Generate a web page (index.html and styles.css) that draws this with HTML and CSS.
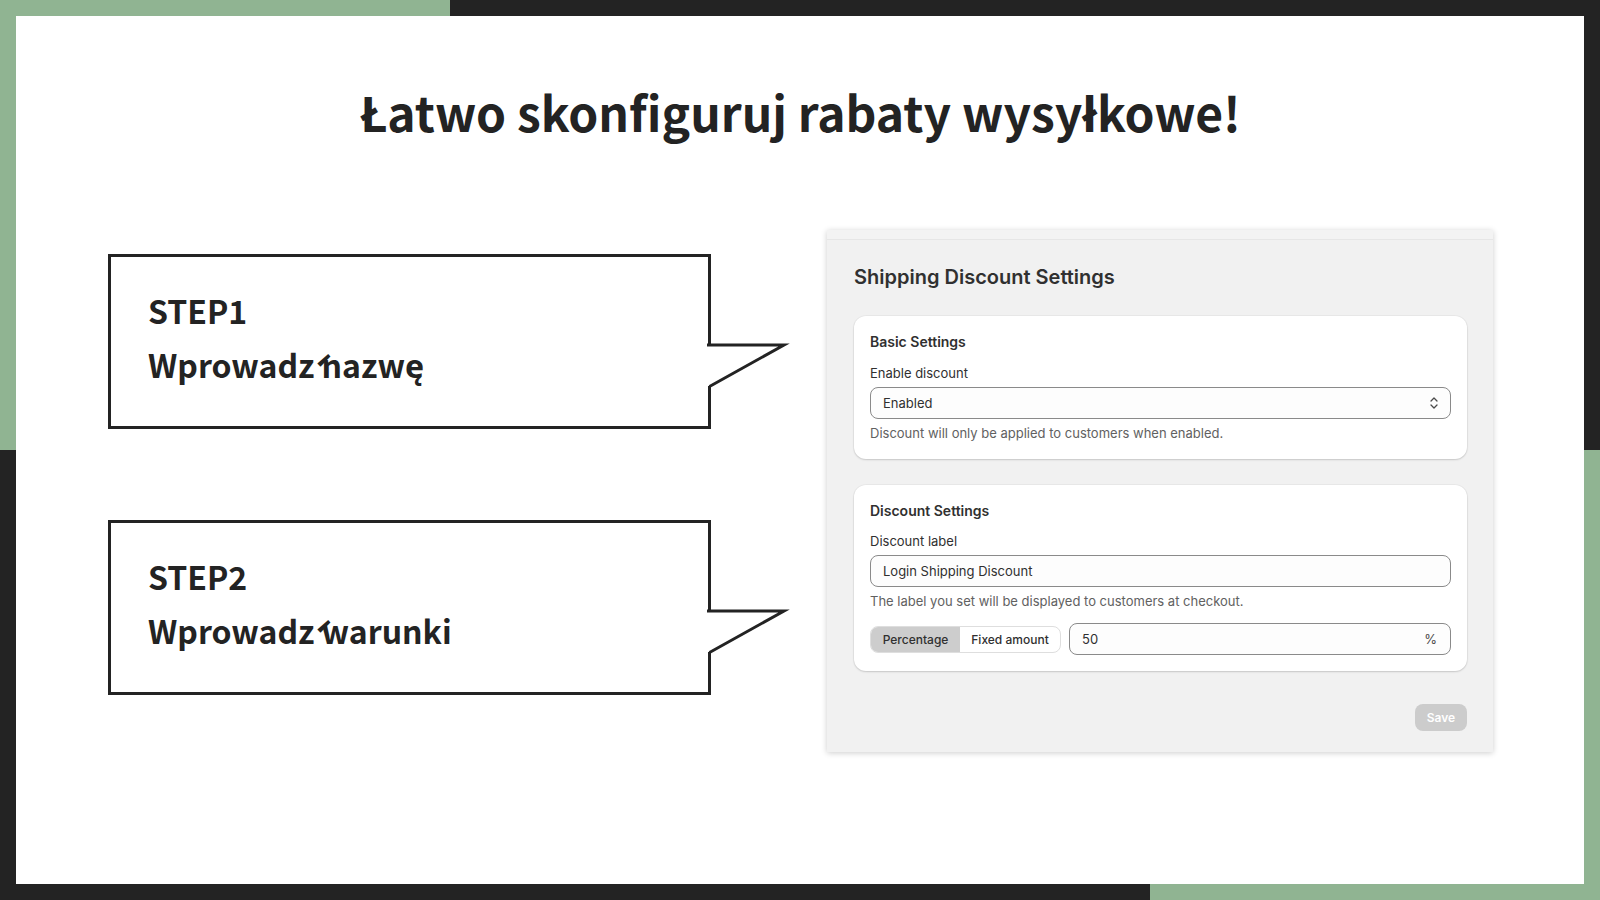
FILE: index.html
```html
<!DOCTYPE html>
<html lang="pl">
<head>
  <meta charset="UTF-8">
  <meta name="viewport" content="width=device-width, initial-scale=1.0">
  <title>Łatwo skonfiguruj rabaty wysyłkowe!</title>
  <link rel="stylesheet" href="styles.css">
</head>
<body>
  <div class="stage">
    <div class="slide">
      <h1 class="title">Łatwo skonfiguruj rabaty wysyłkowe!</h1>

      <div class="content">
        <div class="steps">
          <div class="bubble">
            <p class="step">STEP1</p>
            <p class="step">Wprowadź nazwę</p>
            <svg class="tail" width="80" height="48" viewBox="0 0 80 48">
              <polygon points="1,5 78,5 5,46 1,46" fill="#fff"/>
              <polyline points="1,5 78,5 3.5,46.5" fill="none" stroke="#232323" stroke-width="3" stroke-miterlimit="10"/>
            </svg>
          </div>
          <div class="bubble">
            <p class="step">STEP2</p>
            <p class="step">Wprowadź warunki</p>
            <svg class="tail" width="80" height="48" viewBox="0 0 80 48">
              <polygon points="1,5 78,5 5,46 1,46" fill="#fff"/>
              <polyline points="1,5 78,5 3.5,46.5" fill="none" stroke="#232323" stroke-width="3" stroke-miterlimit="10"/>
            </svg>
          </div>
        </div>

        <div class="panel">
          <div class="panel-band"></div>
          <div class="panel-body">
            <h2 class="panel-title">Shipping Discount Settings</h2>

            <div class="card">
              <h3 class="card-title">Basic Settings</h3>
              <div class="label">Enable discount</div>
              <div class="field select">
                <span>Enabled</span>
                <svg width="10" height="14" viewBox="0 0 10 14">
                  <path d="M2 5l3-3 3 3M2 9l3 3 3-3" fill="none" stroke="#4a4a4a" stroke-width="1.3" stroke-linecap="round" stroke-linejoin="round"/>
                </svg>
              </div>
              <div class="help">Discount will only be applied to customers when enabled.</div>
            </div>

            <div class="card card-second">
              <h3 class="card-title">Discount Settings</h3>
              <div class="label">Discount label</div>
              <div class="field">
                <span>Login Shipping Discount</span>
              </div>
              <div class="help">The label you set will be displayed to customers at checkout.</div>
              <div class="amount-row">
                <div class="segmented">
                  <span class="seg seg-active">Percentage</span>
                  <span class="seg">Fixed amount</span>
                </div>
                <div class="field value">
                  <span>50</span>
                  <span class="suffix">%</span>
                </div>
              </div>
            </div>

            <div class="actions">
              <button class="save" type="button">Save</button>
            </div>
          </div>
        </div>
      </div>
    </div>
  </div>
</body>
</html>
```

FILE: styles.css
```css
body {
  margin: 0;
  background: #232323;
}
.stage {
  width: 1600px;
  height: 900px;
  padding: 16px;
  box-sizing: border-box;
  background:
    linear-gradient(#90b492, #90b492) 0 0 / 450px 16px no-repeat,
    linear-gradient(#90b492, #90b492) 0 0 / 16px 450px no-repeat,
    linear-gradient(#90b492, #90b492) 100% 100% / 450px 16px no-repeat,
    linear-gradient(#90b492, #90b492) 100% 100% / 16px 450px no-repeat,
    #232323;
}
.slide {
  height: 100%;
  background: #fff;
  padding: 66px 91px 0 92px;
  box-sizing: border-box;
}
.title {
  margin: 0;
  font-family: "Noto Sans CJK JP", "Noto Sans", sans-serif;
  font-weight: 700;
  font-size: 48px;
  line-height: 58px;
  color: #232323;
  text-align: center;
}
.content {
  display: flex;
  justify-content: space-between;
  align-items: flex-start;
}
.steps {
  display: flex;
  flex-direction: column;
  gap: 91px;
  margin-top: 114px;
}
.bubble {
  position: relative;
  width: 603px;
  height: 175px;
  box-sizing: border-box;
  border: 3px solid #232323;
  background: #fff;
  padding: 26px 37px;
}
.step {
  margin: 0;
  font-family: "Noto Sans CJK JP", "Noto Sans", sans-serif;
  font-weight: 700;
  font-size: 32px;
  line-height: 54px;
  color: #232323;
}
.tail {
  position: absolute;
  left: 595px;
  top: 83px;
  overflow: visible;
}

/* settings panel */
.panel {
  margin-top: 90px;
  width: 666px;
  height: 522px;
  background: #f1f1f1;
  box-shadow: 0 1px 6px rgba(0, 0, 0, 0.2);
  font-family: Inter, "Liberation Sans", sans-serif;
  color: #303030;
}
.panel-band {
  height: 9px;
  background: #f3f3f3;
  border-bottom: 1px solid #e6e6e6;
}
.panel-body {
  padding: 0 26px 0 27px;
}
.panel-title {
  margin: 25px 0 27px;
  font-size: 20px;
  line-height: 24px;
  font-weight: 600;
}
.card {
  background: #fff;
  border-radius: 12px;
  padding: 16px;
  box-shadow: 0 1px 2px rgba(0, 0, 0, 0.15), 0 0 0 1px rgba(0, 0, 0, 0.03);
}
.card-title {
  margin: 0 0 11px;
  font-size: 14px;
  line-height: 20px;
  font-weight: 600;
}
.card-second {
  margin-top: 26px;
}
.card-second .card-title {
  margin-bottom: 10px;
}
.label {
  font-size: 13px;
  line-height: 20px;
  margin-bottom: 4px;
}
.field {
  height: 32px;
  box-sizing: border-box;
  border: 1px solid #8a8a8a;
  border-radius: 8px;
  background: #fdfdfd;
  padding: 0 12px;
  display: flex;
  align-items: center;
  justify-content: space-between;
  font-size: 13px;
}
.select svg {
  margin-right: -1px;
}
.help {
  margin-top: 4px;
  font-size: 13px;
  line-height: 20px;
  color: #616161;
}
.amount-row {
  margin-top: 12px;
  display: flex;
  align-items: center;
  gap: 8px;
}
.segmented {
  display: flex;
  height: 27px;
  border: 1px solid #dedede;
  border-radius: 8px;
  overflow: hidden;
  box-sizing: border-box;
  background: #fff;
}
.seg {
  display: flex;
  align-items: center;
  justify-content: center;
  width: 100px;
  font-size: 12px;
  font-weight: 500;
}
.seg-active {
  width: 89px;
  background: #cdcdcd;
}
.value {
  flex: 1;
}
.suffix {
  color: #4a4a4a;
  margin-right: 1px;
}
.actions {
  display: flex;
  justify-content: flex-end;
  margin-top: 33px;
}
.save {
  width: 52px;
  height: 27px;
  border: none;
  border-radius: 8px;
  background: #cccccc;
  color: #fff;
  font-family: Inter, "Liberation Sans", sans-serif;
  font-size: 12px;
  font-weight: 600;
}
```
